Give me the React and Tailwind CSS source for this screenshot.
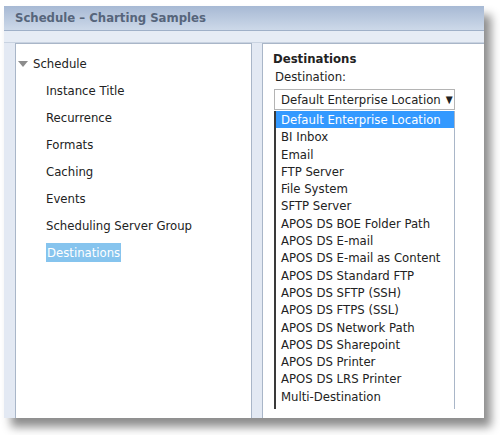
import React from "react";

const items = [
  "Instance Title",
  "Recurrence",
  "Formats",
  "Caching",
  "Events",
  "Scheduling Server Group",
];

const dests = [
  "Default Enterprise Location",
  "BI Inbox",
  "Email",
  "FTP Server",
  "File System",
  "SFTP Server",
  "APOS DS BOE Folder Path",
  "APOS DS E-mail",
  "APOS DS E-mail as Content",
  "APOS DS Standard FTP",
  "APOS DS SFTP (SSH)",
  "APOS DS FTPS (SSL)",
  "APOS DS Network Path",
  "APOS DS Sharepoint",
  "APOS DS Printer",
  "APOS DS LRS Printer",
  "Multi-Destination",
];

export default function App() {
  return (
    <div
      className="w-[500px] h-[435px] bg-white pl-[4px] pt-[6px] overflow-hidden"
      style={{ fontFamily: '"DejaVu Sans Condensed", "DejaVu Sans", sans-serif' }}
    >
      <div className="w-[480px] h-[412px] flex flex-col bg-[#e3e9f3] shadow-[7px_9px_9px_rgba(0,0,0,0.45)]">
        <div className="h-[25px] shrink-0 bg-gradient-to-b from-[#a7b9d4] to-[#cdd9e9] border-b border-[#9fb0c8] flex items-center pl-[11px]">
          <span className="text-[13px] font-bold text-[#56657b]">
            Schedule – Charting Samples
          </span>
        </div>
        <div className="h-[12px] shrink-0 bg-[#e6ecf5] border-b border-[#c9d3e1]" />
        <div className="flex flex-1 min-h-0 pl-[11px] gap-[10px]">
          <div className="w-[237px] bg-white border border-b-0 border-[#a9b6c8] pt-[11px] text-[13px] text-[#222]">
            <div className="flex items-center h-[18px]">
              <svg width="10" height="6" viewBox="0 0 10 6" className="ml-[2px] mr-[5px]">
                <polygon points="0,0 10,0 5,6" fill="#8c8c8c" />
              </svg>
              <span>Schedule</span>
            </div>
            <div className="pl-[30px] flex flex-col items-start">
              {items.map((t) => (
                <div key={t} className="h-[27px] flex items-center pt-[8px] leading-none">
                  {t}
                </div>
              ))}
              <div className="h-[27px] flex items-center pt-[8px]">
                <span className="bg-[#86c4ee] text-white px-[1px] h-[19px] flex items-center">
                  Destinations
                </span>
              </div>
            </div>
          </div>
          <div className="flex-1 bg-white border-l border-t border-[#a9b6c8] pl-[10px] pt-[7px] text-[13px] text-[#222]">
            <div className="font-bold leading-[16px]">Destinations</div>
            <div className="pl-[2px] leading-[16px] mt-[2px]">Destination:</div>
            <div className="ml-[1px] mt-[4px] w-[181px] h-[21px] border border-[#b4b4b4] flex items-center pl-[6px]">
              Default Enterprise Location <span className="ml-[5px] text-[10px]">▼</span>
            </div>
            <div className="ml-[1px] mt-[1px] w-[181px] h-[298px] border-l-2 border-l-[#3a3a3a] border-r border-r-[#a9b6c8]">
              {dests.map((d, i) => (
                <div
                  key={d}
                  className={
                    "h-[17.3px] leading-[17.3px] pl-[5px] whitespace-nowrap " +
                    (i === 0 ? "bg-[#3399ff] text-white" : "")
                  }
                >
                  {d}
                </div>
              ))}
            </div>
          </div>
        </div>
      </div>
    </div>
  );
}
